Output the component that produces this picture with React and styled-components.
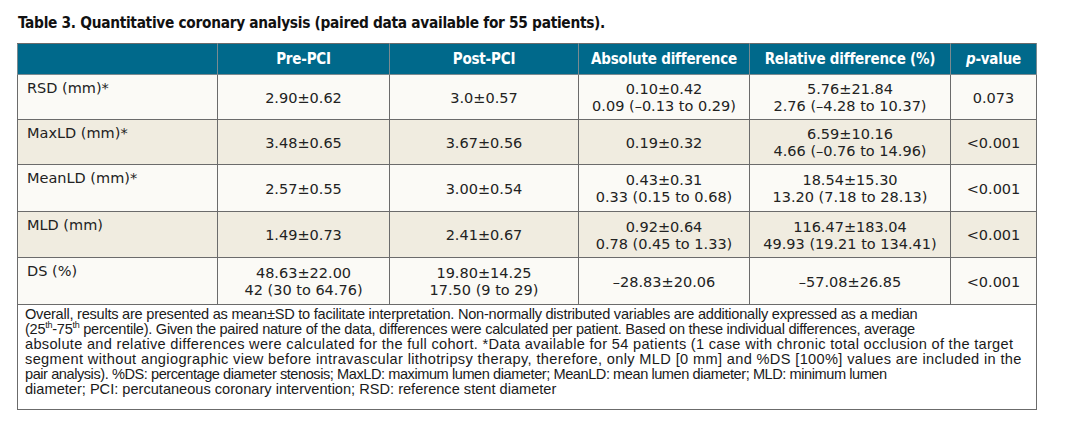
import React from "react";
import styled, { createGlobalStyle } from "styled-components";

const GlobalStyle = createGlobalStyle`
  body {
    margin: 0;
    background: #ffffff;
  }
`;

const condensed = `"DejaVu Sans Condensed", "Liberation Sans", sans-serif`;

const Page = styled.div`
  padding: 13px 0 0 17px;
  width: 1019px;
`;

const Title = styled.div`
  font-family: ${condensed};
  font-weight: bold;
  font-size: 15.3px;
  letter-spacing: -0.3px;
  line-height: 20px;
  color: #111;
  margin: 0 0 10px 1px;
`;

const Table = styled.table`
  border-collapse: collapse;
  width: 1019px;
  table-layout: fixed;
  font-family: "DejaVu Sans", "Liberation Sans", sans-serif;
  font-size: 14.5px;
  color: #222;
`;

const HeadCell = styled.th`
  background: #00698b;
  color: #ffffff;
  font-family: ${condensed};
  font-weight: bold;
  font-size: 15px;
  letter-spacing: -0.2px;
  height: 30px;
  padding: 0;
  text-align: center;
  white-space: nowrap;
  border: 1px solid #7a8a90;
  border-top-color: #6b6b6b;
`;

const Row = styled.tr`
  background: ${(p) => (p.$shade ? "#f0ece0" : "#fbfaf6")};
  height: ${(p) => p.$h}px;
  border-top: 1px solid ${(p) => (p.$dark ? "#111" : "#6b6b6b")};
`;

const LabelCell = styled.td`
  vertical-align: top;
  padding: 5px 0 0 9px;
  border: 1px solid #6b6b6b;
  border-top-color: inherit;
`;

const Cell = styled.td`
  text-align: center;
  vertical-align: middle;
  line-height: 17px;
  padding: 2px 0 0;
  white-space: nowrap;
  border: 1px solid #6b6b6b;
  border-top-color: inherit;
`;

const NoteCell = styled.td`
  background: #ffffff;
  vertical-align: top;
  padding: 2px 2px 0 7px;
  font-family: "Liberation Sans", Arial, sans-serif;
  font-size: 14.6px;
  line-height: 15px;
  color: #1a1a1a;
  white-space: nowrap;
  border: 1px solid #6b6b6b;
`;

const NoteLine = styled.div`
  height: 15px;
  letter-spacing: ${(p) => p.$track || 0}px;
`;

const Sup = styled.sup`
  font-size: 9px;
  line-height: 0;
`;

const rows = [
  { label: "RSD (mm)*", pre: ["2.90±0.62"], post: ["3.0±0.57"], abs: ["0.10±0.42", "0.09 (–0.13 to 0.29)"], rel: ["5.76±21.84", "2.76 (–4.28 to 10.37)"], p: "0.073", h: 45 },
  { label: "MaxLD (mm)*", pre: ["3.48±0.65"], post: ["3.67±0.56"], abs: ["0.19±0.32"], rel: ["6.59±10.16", "4.66 (–0.76 to 14.96)"], p: "<0.001", h: 45, shade: true },
  { label: "MeanLD (mm)*", pre: ["2.57±0.55"], post: ["3.00±0.54"], abs: ["0.43±0.31", "0.33 (0.15 to 0.68)"], rel: ["18.54±15.30", "13.20 (7.18 to 28.13)"], p: "<0.001", h: 47 },
  { label: "MLD (mm)", pre: ["1.49±0.73"], post: ["2.41±0.67"], abs: ["0.92±0.64", "0.78 (0.45 to 1.33)"], rel: ["116.47±183.04", "49.93 (19.21 to 134.41)"], p: "<0.001", h: 46, shade: true },
  { label: "DS (%)", pre: ["48.63±22.00", "42 (30 to 64.76)"], post: ["19.80±14.25", "17.50 (9 to 29)"], abs: ["–28.83±20.06"], rel: ["–57.08±26.85"], p: "<0.001", h: 47, dark: true },
];

// the printed footnote keeps its own line breaks
const noteLines = [
  { track: -0.25, text: "Overall, results are presented as mean±SD to facilitate interpretation. Non-normally distributed variables are additionally expressed as a median" },
  {
    track: -0.28,
    text: (
      <>
        (25<Sup>th</Sup>-75<Sup>th</Sup> percentile). Given the paired nature of the data, differences were calculated per patient. Based on these individual differences, average
      </>
    ),
  },
  { track: 0.3, text: "absolute and relative differences were calculated for the full cohort. *Data available for 54 patients (1 case with chronic total occlusion of the target" },
  { track: 0.35, text: "segment without angiographic view before intravascular lithotripsy therapy, therefore, only MLD [0 mm] and %DS [100%] values are included in the" },
  { track: -0.45, text: "pair analysis). %DS: percentage diameter stenosis; MaxLD: maximum lumen diameter; MeanLD: mean lumen diameter; MLD: minimum lumen" },
  { track: 0, text: "diameter; PCI: percutaneous coronary intervention; RSD: reference stent diameter" },
];

const Lines = ({ items }) =>
  items.map((t, i) => (
    <React.Fragment key={i}>
      {i > 0 && <br />}
      {t}
    </React.Fragment>
  ));

export default function App() {
  return (
    <Page>
      <GlobalStyle />
      <Title>Table 3. Quantitative coronary analysis (paired data available for 55 patients).</Title>
      <Table>
        <colgroup>
          <col style={{ width: 200 }} />
          <col style={{ width: 172 }} />
          <col style={{ width: 189 }} />
          <col style={{ width: 171 }} />
          <col style={{ width: 201 }} />
          <col style={{ width: 86 }} />
        </colgroup>
        <thead>
          <tr>
            <HeadCell />
            <HeadCell>Pre-PCI</HeadCell>
            <HeadCell>Post-PCI</HeadCell>
            <HeadCell>Absolute difference</HeadCell>
            <HeadCell>Relative difference (%)</HeadCell>
            <HeadCell>
              <i>p</i>-value
            </HeadCell>
          </tr>
        </thead>
        <tbody>
          {rows.map((r) => (
            <Row key={r.label} $shade={r.shade} $dark={r.dark} $h={r.h}>
              <LabelCell>{r.label}</LabelCell>
              <Cell><Lines items={r.pre} /></Cell>
              <Cell><Lines items={r.post} /></Cell>
              <Cell><Lines items={r.abs} /></Cell>
              <Cell><Lines items={r.rel} /></Cell>
              <Cell>{r.p}</Cell>
            </Row>
          ))}
          <Row $dark={false} $h={105}>
            <NoteCell colSpan={6}>
              {noteLines.map((line, i) => (
                <NoteLine key={i} $track={line.track}>
                  {line.text}
                </NoteLine>
              ))}
            </NoteCell>
          </Row>
        </tbody>
      </Table>
    </Page>
  );
}
